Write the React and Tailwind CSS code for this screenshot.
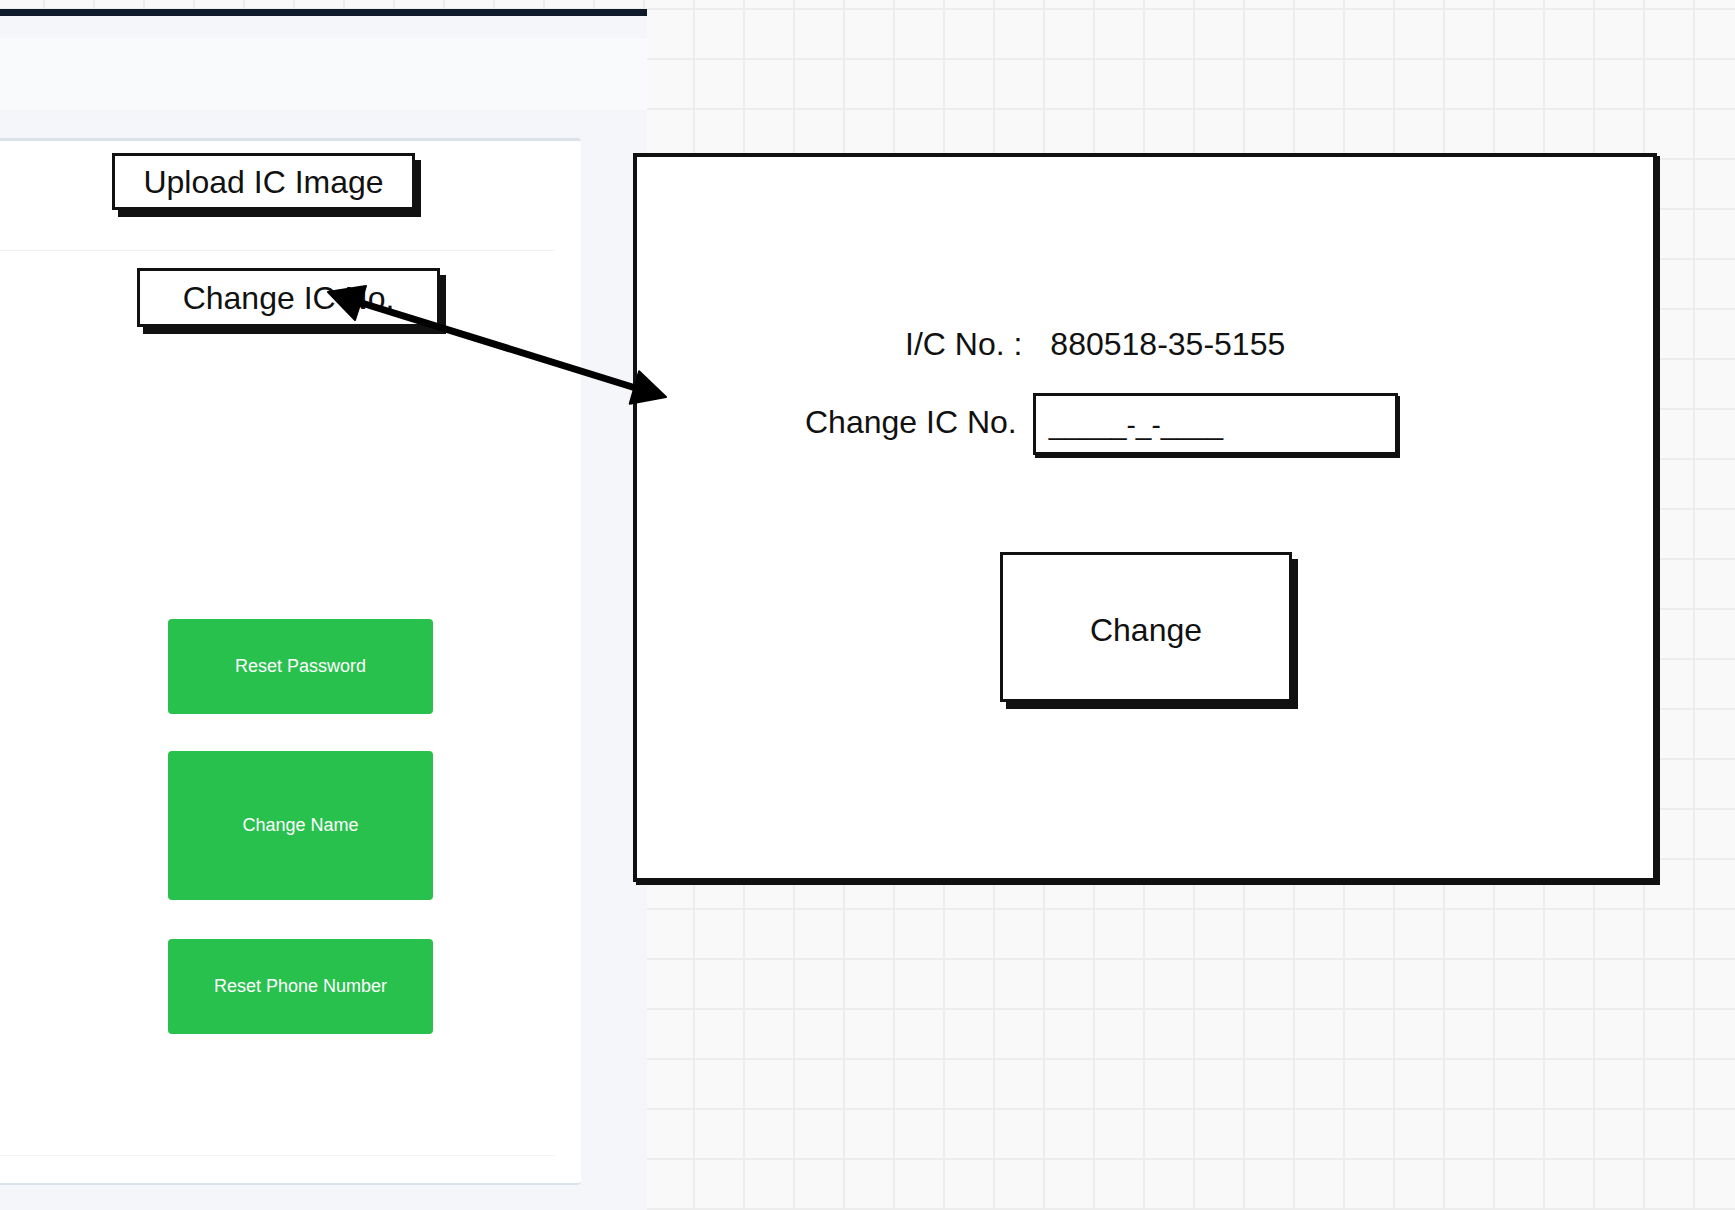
import React from 'react';

const sans = "'Liberation Sans', Arial, sans-serif";

// sketchy wireframe button, black outline with offset shadow
function SketchButton({ className, children }) {
  return (
    <div className={`flex items-center justify-center bg-white border-[3px] border-[#111] shadow-[6px_7px_0_#111] text-[32px] leading-[36px] text-[#111] ${className}`}>
      {children}
    </div>
  );
}

function GreenButton({ className, label }) {
  return (
    <div className={`flex items-center justify-center rounded-[4px] bg-[#28c14d] text-white text-[18px] ${className}`}>
      {label}
    </div>
  );
}

function Arrow() {
  return (
    <svg className="absolute left-0 top-0 pointer-events-none" width="1735" height="1210" viewBox="0 0 1735 1210">
      <line x1="352" y1="300" x2="642" y2="390" stroke="#000" strokeWidth="7" />
      <polygon points="328,292 355,320 366,286" fill="#000" stroke="#000" strokeWidth="2" strokeLinejoin="round" />
      <polygon points="666,397 629.7,403.8 639.1,371.2" fill="#000" stroke="#000" strokeWidth="2" strokeLinejoin="round" />
    </svg>
  );
}

export default function App() {
  return (
    <div
      className="relative flex w-[1735px] h-[1210px] overflow-hidden bg-[#f9f9f9] [background-image:linear-gradient(to_right,#ededed_2px,transparent_2px),linear-gradient(to_bottom,#ededed_2px,transparent_2px)] [background-size:50px_50px] [background-position:43px_8px]"
      style={{ fontFamily: sans }}
    >
      {/* Left app column */}
      <div className="w-[647px] mt-[9px] h-[1201px] flex flex-col">
        <div className="h-[7px] bg-[#0f1a2b]" />
        <div className="h-[22px] bg-[#f4f6f9]" />
        <div className="h-[72px] bg-[#f9fafb]" />
        <div className="flex-1 flex flex-col bg-[#f4f6f9] pt-[28px] pr-[66px] pb-[25px]">
          <div className="flex-1 flex flex-col bg-white border-t-[3px] border-b-2 border-[#dbe2e9] rounded-r-[4px]">
            <SketchButton className="mt-[12px] ml-[112px] w-[303px] h-[57px]">Upload IC Image</SketchButton>
            <div className="mt-[40px] w-[555px] h-px bg-[#f1f2f3]" />
            <SketchButton className="mt-[17px] ml-[137px] w-[303px] h-[59px]">Change IC No.</SketchButton>

            <GreenButton className="mt-[292px] ml-[168px] w-[265px] h-[95px]" label="Reset Password" />
            <GreenButton className="mt-[37px] ml-[168px] w-[265px] h-[149px]" label="Change Name" />
            <GreenButton className="mt-[39px] ml-[168px] w-[265px] h-[95px]" label="Reset Phone Number" />

            <div className="mt-[121px] w-[555px] h-px bg-[#f3f4f5]" />
          </div>
        </div>
      </div>

      {/* Change IC popup sketch on the canvas */}
      <div className="absolute left-[633px] top-[153px] w-[1024px] h-[729px] bg-white border-[4px] border-[#111] shadow-[3px_3px_0_#111] flex flex-col text-[#111]">
        <div className="mt-[169px] ml-[268px] flex items-center text-[32px] leading-[36px]">
          <span>I/C No. :</span>
          <span className="ml-[28px]">880518-35-5155</span>
        </div>
        <div className="mt-[31px] ml-[168px] flex items-center">
          <span className="text-[32px] leading-[36px] pb-[4px]">Change IC No.</span>
          <div className="ml-[16px] w-[365px] h-[62px] border-[3px] border-[#111] shadow-[2px_3px_0_#111] flex items-center pl-[13px] pt-[2px] text-[28px] leading-[30px]">
            _____-_-____
          </div>
        </div>
        <SketchButton className="mt-[97px] ml-[363px] w-[292px] h-[150px] pt-[5px]">Change</SketchButton>
      </div>

      <Arrow />
    </div>
  );
}
